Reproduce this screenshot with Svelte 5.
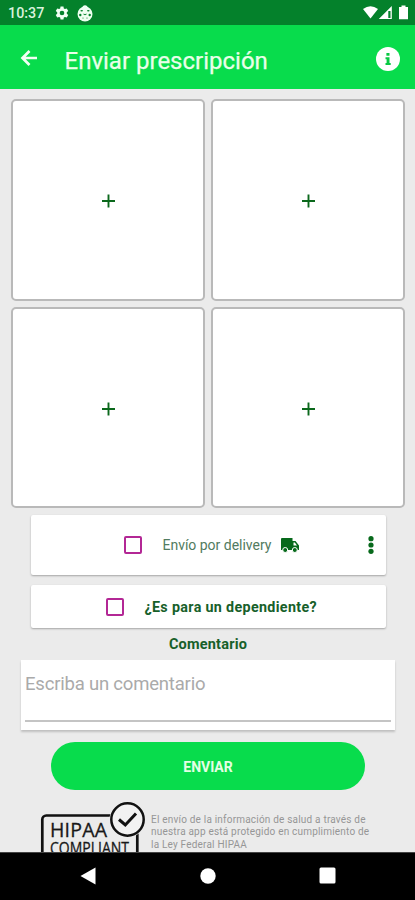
<script>
  const slots = [1, 2, 3, 4];
  let comment = $state('');
</script>

<div class="screen">
  <div class="status">
    <span class="time">10:37</span>
    <svg class="gear" width="14" height="14" viewBox="0 0 24 24"><path fill="#f2fff4" fill-rule="evenodd" d="M9.5 1h5l.6 3.2 2 1.100 3.100-1.100 2.500 4.300-2.500 2.300v2.400l2.500 2.300-2.500 4.300-3.100-1.100-2 1.100-.6 3.200h-5l-.6-3.200-2-1.100-3.100 1.100-2.500-4.300 2.500-2.300v-2.400L1.300 8.500l2.500-4.300 3.100 1.100 2-1.100zM12 8a4 4 0 1 0 0 8 4 4 0 0 0 0-8z"/></svg>
    <svg class="ball" width="16" height="17" viewBox="0 0 16 17">
      <circle cx="8" cy="9" r="7.500" fill="#effff1"/><circle cx="8" cy="2.800" r="2.600" fill="#effff1"/>
      <g fill="#04812b"><ellipse cx="4.700" cy="5.800" rx="1.300" ry=".7"/><ellipse cx="11.300" cy="5.800" rx="1.300" ry=".7"/><circle cx="3.300" cy="10" r="1.200"/><circle cx="12.700" cy="10" r="1.200"/><path d="M6.500 8.500l1.500.8 1.500-.8v1l-1.500.8-1.500-.8z"/><circle cx="6" cy="13" r=".6"/><circle cx="10" cy="13" r=".6"/></g>
    </svg>
    <svg class="signals" width="46" height="16" viewBox="0 0 46 16" fill="#fff">
      <path d="M0 4Q7.500-1.500 15 4L7.500 13.500z"/>
      <path fill-rule="evenodd" d="M28.800 1v13H15.800zM25.300 6v7h2.200V6z"/>
      <path d="M38.500.5h4V2H45v12.300h-9V2h2.500z"/>
    </svg>
  </div>

  <header>
    <svg class="back" width="18" height="18" viewBox="0 0 18 18"><path d="M9.500 2L2.500 9l7 7M2.500 9H17" fill="none" stroke="#f2fff4" stroke-width="2.700"/></svg>
    <h1>Enviar prescripción</h1>
    <svg class="info" width="24" height="24" viewBox="0 0 24 24"><circle cx="12" cy="12" r="12" fill="#fff"/><path fill="#07c943" d="M10.400 6h3.100v2.800h-3.100zM9.500 10.300h4v5.600h1.200v2H9.500v-2h1.100v-3.600H9.500z"/></svg>
  </header>

  <main>
    <div class="grid">
      {#each slots as slot (slot)}
        <div class="tile">
          <svg width="14" height="14" viewBox="0 0 14 14"><path d="M7.500 .5v13M1 7h13" stroke="#0b681c" stroke-width="1.900"/></svg>
        </div>
      {/each}
    </div>

    <div class="card delivery">
      <span class="box"></span>
      <span class="label">Envío por delivery</span>
      <svg class="truck" width="18" height="15" viewBox="0 0 18 15">
        <path fill="#07691b" fill-rule="evenodd" d="M1 0h10.500v3h3L18 7.500V12H0V1Q0 0 1 0zM12.500 4.500v3H16l-2.200-3z"/>
        <g fill="#07691b" stroke="#fff" stroke-width="1"><circle cx="4.200" cy="12" r="2.500"/><circle cx="13.800" cy="12" r="2.500"/></g>
      </svg>
      <svg class="dots" width="6" height="18" viewBox="0 0 6 18" fill="#07691b"><circle cx="3" cy="2.700" r="2.600"/><circle cx="3" cy="9" r="2.600"/><circle cx="3" cy="15.300" r="2.600"/></svg>
    </div>

    <div class="card dependent">
      <span class="box"></span>
      <span class="label">¿Es para un dependiente?</span>
    </div>

    <h2>Comentario</h2>
    <div class="comment"><input type="text" placeholder="Escriba un comentario" bind:value={comment} /></div>
    <button>ENVIAR</button>

    <div class="legal">
      <svg width="106" height="56" viewBox="0 0 106 56">
        <rect x="2.300" y="13.500" width="95" height="60" rx="4" fill="none" stroke="#111" stroke-width="2.700"/>
        <circle cx="87.500" cy="17.500" r="18" fill="#ebebeb"/>
        <circle cx="87.500" cy="17.500" r="16.200" fill="#f2f2f2" stroke="#111" stroke-width="2.500"/>
        <path d="M79 17.500l6.300 5.500L96 11.500" fill="none" stroke="#111" stroke-width="3"/>
        <text x="10" y="34.500" font-size="19.500" textLength="57" lengthAdjust="spacing">HIPAA</text>
        <text x="10" y="52.300" font-size="16" textLength="79" lengthAdjust="spacingAndGlyphs">COMPLIANT</text>
      </svg>
      <p>El envío de la información de salud a través de<br />nuestra app está protegido en cumplimiento de<br />la Ley Federal HIPAA</p>
    </div>
  </main>

  <nav>
    <svg width="16" height="18" viewBox="0 0 16 18"><path d="M15.500.5v17L.5 9z" fill="#fff"/></svg>
    <svg width="16" height="16" viewBox="0 0 16 16"><circle cx="8" cy="8" r="7.700" fill="#fff"/></svg>
    <svg width="17" height="17" viewBox="0 0 17 17"><rect x=".5" y=".5" width="16" height="16" rx="1.500" fill="#fff"/></svg>
  </nav>
</div>

<style>
  :global(body) { margin: 0; }
  .screen { width: 415px; height: 900px; display: flex; flex-direction: column; overflow: hidden; background: #ebebeb; font-family: Roboto, "Liberation Sans", sans-serif; }
  .screen * { box-sizing: border-box; }
  svg { display: block; flex: none; }
  .status { height: 24.500px; flex: none; background: #04812b; display: flex; align-items: center; padding: 2px 6px 0 8px; }
  .time { width: 36px; font-size: 14.300px; font-weight: 500; color: #d9f3dd; white-space: nowrap; }
  .gear { margin-left: 11px; }
  .ball { margin-left: 8px; }
  .signals { margin-left: auto; }
  header { height: 64px; flex: none; background: #08dc4c; display: flex; align-items: center; padding: 4px 15px 0 20px; }
  .back { margin-top: -1px; }
  h1 { margin: 5px 0 0 26.500px; font-size: 24px; line-height: 28px; font-weight: 400; color: #e9ffe9; -webkit-text-stroke: .25px #e9ffe9; white-space: nowrap; }
  .info { margin: 0 0 0 auto; }
  main { flex: 1; min-height: 0; overflow: hidden; display: flex; flex-direction: column; align-items: center; padding-top: 10.500px; }
  .grid { flex: none; width: 394px; display: grid; grid-template-columns: 194px 194px; grid-auto-rows: 201.500px; gap: 6px; align-self: flex-start; margin-left: 11px; }
  .tile { border: 2px solid #b9b9b9; border-radius: 5px; background: #fff; display: flex; align-items: center; justify-content: center; padding-top: 3px; }
  .card { flex: none; width: 355px; margin-left: 1px; background: #fff; border-radius: 2px; box-shadow: 0 1px 2px #0000004d; display: flex; align-items: center; }
  .delivery { height: 60px; margin-top: 7px; padding: 0 12px 0 93px; }
  .dependent { height: 43px; margin-top: 10px; padding-left: 75px; }
  .box { width: 18px; height: 18px; flex: none; border: 2px solid #b32795; border-radius: 2px; }
  .label { white-space: nowrap; }
  .delivery .label { margin-left: 21px; width: 108px; font-size: 14px; letter-spacing: -.02px; color: #527b60; }
  .dependent .label { margin-left: 21px; font-size: 14.300px; letter-spacing: .34px; font-weight: 700; color: #17602a; }
  .truck { margin-left: 10px; }
  .dots { margin-left: auto; }
  h2 { flex: none; margin: 8px 0 0 1px; font-size: 14.500px; letter-spacing: .2px; line-height: 18px; font-weight: 700; color: #17602a; }
  .comment { flex: none; width: 374px; height: 70px; margin: 6px 0 0 1px; padding: 5px 4px 0; background: #fff; box-shadow: 0 2px 2px #00000030; }
  input { display: block; width: 100%; height: 57px; padding: 0 0 18px; border: 0; border-bottom: 2px solid #c4c4c4; border-radius: 0; outline: 0; background: transparent; font: 400 18.500px Roboto, sans-serif; letter-spacing: -.2px; color: #555; }
  input::placeholder { color: #aaa; opacity: 1; }
  button { flex: none; width: 314px; height: 48px; margin: 12px 0 0 1px; padding: 2px 0 0; border: 0; border-radius: 24px; background: #08dc4c; color: #e4ffe4; font: 700 14px Roboto, sans-serif; }
  .legal { flex: none; width: 375px; display: flex; align-items: flex-start; margin-top: 12px; padding-left: 20px; }
  .legal text { fill: #181818; stroke: #181818; stroke-width: .3px; font-family: "Open Sans", "Noto Sans", sans-serif; }
  p { margin: 12px 0 0 5px; font-size: 10px; letter-spacing: .2px; line-height: 12.400px; color: #969696; white-space: nowrap; }
  nav { height: 48px; flex: none; background: #000; border-top: 1px solid #444; display: flex; align-items: center; justify-content: space-between; padding: 0 79px 2px 80px; }
</style>
